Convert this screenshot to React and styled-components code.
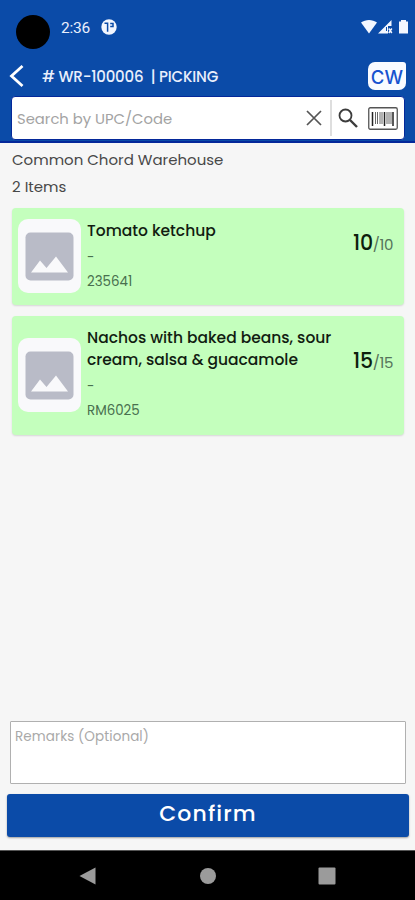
import styled, { createGlobalStyle } from "styled-components";

const GlobalStyle = createGlobalStyle`
  * {
    box-sizing: border-box;
  }
  body {
    margin: 0;
    font-family: Poppins, Inter, "Open Sans", sans-serif;
  }
`;

const Screen = styled.div`
  width: 100%;
  height: 900px;
  display: flex;
  flex-direction: column;
  background: #f6f6f6;
`;

const Header = styled.header`
  height: 143px;
  background: #0b4ba8;
  border-bottom: 2px solid #04289a;
`;

const StatusBar = styled.div`
  height: 60px;
  padding: 12px 7px 0 16px;
  display: flex;
  align-items: flex-start;
`;

const Camera = styled.span`
  width: 34px;
  height: 34px;
  margin-top: 3px;
  border-radius: 50%;
  background: #000;
`;

const Clock = styled.span`
  width: 30px;
  margin: 6px 0 0 11px;
  font-family: Roboto, sans-serif;
  font-size: 15.5px;
  line-height: 20px;
  letter-spacing: -0.2px;
  color: #e9effc;
`;

const AppBadge = styled.svg`
  width: 16px;
  height: 16px;
  margin: 7px 0 0 10px;
`;

const StatusIcons = styled.svg`
  width: 47px;
  height: 16px;
  margin: 7px 0 0 auto;
`;

const TitleBar = styled.div`
  height: 32px;
  padding: 0 9px 0 9px;
  display: flex;
  align-items: center;
`;

const BackIcon = styled.svg`
  width: 16px;
  height: 24px;
`;

const Title = styled.h1`
  margin: 0 0 0 17px;
  font-size: 15px;
  font-weight: 500;
  letter-spacing: -0.2px;
  white-space: pre;
  color: #e9effc;
`;

const Avatar = styled.div`
  width: 38px;
  height: 28px;
  margin-left: auto;
  padding-top: 1px;
  border-radius: 7px 3px 7px 7px;
  display: flex;
  align-items: center;
  justify-content: center;
  background: #f9fbff;
  color: #1752cf;
  font-family: Inter, sans-serif;
  font-size: 18.5px;
  font-weight: 500;
  letter-spacing: 0.1px;
`;

const SearchBox = styled.div`
  height: 44px;
  margin: 4px 10px 0 11px;
  padding-left: 5px;
  display: flex;
  align-items: center;
  border: 1px solid #04289a;
  border-radius: 4px;
  background: #fff;
`;

const SearchInput = styled.input`
  flex: 1;
  min-width: 0;
  padding: 1px 0 0;
  border: none;
  outline: none;
  background: none;
  font: inherit;
  font-size: 14.8px;
  &::placeholder {
    color: #a3a3a3;
    opacity: 1;
  }
`;

const Divider = styled.span`
  width: 2px;
  height: 36px;
  margin: 0 6px 0 8px;
  background: #dedede;
`;

const ClearIcon = styled.svg`
  width: 16px;
  height: 16px;
`;

const SearchIcon = styled.svg`
  width: 20px;
  height: 20px;
  margin-bottom: 1px;
`;

const BarcodeIcon = styled.svg`
  width: 30px;
  height: 24px;
  margin: 2px 6px 0 10px;
`;

const Content = styled.main`
  flex: 1;
  padding: 3px 11px 0 12px;
`;

const Info = styled.p`
  margin: 0;
  font-size: 15px;
  line-height: 27px;
  color: #484848;
`;

const Card = styled.article`
  min-height: ${(props) => (props.$tall ? "119px" : "97px")};
  margin-top: 11px;
  padding: 11px 11px 0 6px;
  display: flex;
  border-radius: 4px;
  background: #c4ffbd;
  box-shadow: 0 1px 2px rgba(0, 0, 0, 0.13);
  &:first-of-type {
    margin-top: 8px;
  }
`;

const Thumb = styled.div`
  width: 63px;
  height: 74px;
  margin-top: ${(props) => (props.$tall ? "11px" : "0")};
  display: flex;
  align-items: center;
  justify-content: center;
  border-radius: 10px;
  background: #f9f9fb;
`;

const Details = styled.div`
  flex: 1;
  padding: ${(props) => (props.$tall ? "0" : "1px")} 0 0 6px;
`;

const Name = styled.h2`
  margin: 0 0 4px;
  font-size: 15.5px;
  font-weight: 500;
  line-height: 22px;
  white-space: pre-line;
  color: #111c11;
`;

const Meta = styled.p`
  margin: 0;
  font-size: 13.4px;
  line-height: 24px;
  color: #49704f;
`;

const Quantity = styled.div`
  margin-top: ${(props) => (props.$tall ? "21px" : "11px")};
  font-size: 20.5px;
  font-weight: 500;
  line-height: 26px;
  letter-spacing: -0.2px;
  color: #0d210d;

  span {
    font-size: 15px;
    font-weight: 400;
    letter-spacing: -0.4px;
    color: #55735a;
  }
`;

const Footer = styled.footer`
  padding: 0 6px 13px 7px;
`;

const Remarks = styled.textarea`
  display: block;
  width: calc(100% - 6px);
  height: 63px;
  margin: 0 0 10px 3px;
  padding: 5px 4px;
  border: 1px solid #b0b0b0;
  border-radius: 1px;
  outline: none;
  resize: none;
  background: #fff;
  font: inherit;
  font-size: 13.5px;
  line-height: 19px;
  letter-spacing: 0.1px;
  &::placeholder {
    color: #a9a9a9;
    opacity: 1;
  }
`;

const Confirm = styled.button`
  display: block;
  width: 100%;
  height: 43px;
  padding: 0 0 5px;
  border: none;
  border-radius: 3px;
  background: #0b4ba8;
  box-shadow: 0 1px 2px rgba(0, 0, 0, 0.35);
  color: #fff;
  font: inherit;
  font-size: 22px;
  font-weight: 500;
  letter-spacing: 1.1px;
`;

const NavBar = styled.nav`
  height: 50px;
  padding: 0 79px 0 79px;
  display: flex;
  align-items: center;
  justify-content: space-between;
  border-top: 1px solid #555;
  background: #000;
`;

const NavIcon = styled.svg`
  width: 18px;
  height: 18px;
  fill: #9b9b9b;
`;

const items = [
  {
    code: "235641",
    name: "Tomato ketchup",
    picked: 10,
    total: 10,
  },
  {
    code: "RM6025",
    name: "Nachos with baked beans, sour\ncream, salsa & guacamole",
    picked: 15,
    total: 15,
    tall: true,
  },
];

function ImagePlaceholder() {
  return (
    <svg width="49" height="49" viewBox="0 0 49 49">
      <rect x="0.5" y="0.5" width="48" height="48" rx="5" fill="#b9bbc7" />
      <path d="M6 40.5L15 28.5L21.5 36L31 24.5L43 40.5Z" fill="#f9f9fb" />
    </svg>
  );
}

function Item({ item }) {
  return (
    <Card $tall={item.tall}>
      <Thumb $tall={item.tall}>
        <ImagePlaceholder />
      </Thumb>
      <Details $tall={item.tall}>
        <Name>{item.name}</Name>
        <Meta>-</Meta>
        <Meta>{item.code}</Meta>
      </Details>
      <Quantity $tall={item.tall}>
        {item.picked}
        <span>/{item.total}</span>
      </Quantity>
    </Card>
  );
}

export default function App() {
  return (
    <>
      <GlobalStyle />
      <Screen>
        <Header>
          <StatusBar>
            <Camera />
            <Clock>2:36</Clock>
            <AppBadge viewBox="0 0 16 16">
              <circle cx="8" cy="8" r="7.7" fill="#f2f6ff" />
              <path
                d="M3.5 4.2H6.6V12.8M9.2 4.4H12V7.4H9.2"
                fill="none"
                stroke="#0b4ba8"
                strokeWidth="1.5"
              />
            </AppBadge>
            <StatusIcons viewBox="0 0 47 16" fill="#f4f7ff">
              <path d="M0 3.5C4.5 0 11.5 0 16 3.5L8 14.5Z" />
              <path d="M30.5 1V7H27V14.5H17Z" />
              <path d="M27.8 9.5l3 4.5M30.8 9.5l-3 4.5" stroke="#f4f7ff" strokeWidth="1.5" />
              <path d="M25.5 8v4" stroke="#0b4ba8" />
              <path d="M40 1h5v1.5h2V14.5h-9V2.5h2Z" />
            </StatusIcons>
          </StatusBar>
          <TitleBar>
            <BackIcon viewBox="0 0 16 24">
              <path
                d="M13.5 2L2.5 12L13.5 22"
                fill="none"
                stroke="#fff"
                strokeWidth="2.8"
              />
            </BackIcon>
            <Title>{"# WR-100006  | PICKING"}</Title>
            <Avatar>CW</Avatar>
          </TitleBar>
          <SearchBox>
            <SearchInput placeholder="Search by UPC/Code" />
            <ClearIcon viewBox="0 0 16 16">
              <path d="M1 1L15 15M15 1L1 15" stroke="#555" strokeWidth="1.7" />
            </ClearIcon>
            <Divider />
            <SearchIcon viewBox="0 0 20 20" fill="none" stroke="#3c3c3c">
              <circle cx="7.5" cy="7.5" r="6" strokeWidth="1.8" />
              <path d="M12 12L19 19" strokeWidth="2.4" />
            </SearchIcon>
            <BarcodeIcon viewBox="0 0 30 24">
              <rect x="0.75" y="0.75" width="28.5" height="21.5" rx="1.5" fill="#fff" stroke="#555" strokeWidth="1.3" />
              <path d="M4.5 5v14M16.5 5v14M25 5v14" stroke="#222" strokeWidth="1.5" />
              <path d="M7.5 5v12M9.5 5v12M12 5v12M14 5v12M19 5v12M21 5v12M23 5v12" stroke="#666" strokeWidth="1" />
            </BarcodeIcon>
          </SearchBox>
        </Header>
        <Content>
          <Info>Common Chord Warehouse</Info>
          <Info>2 Items</Info>
          {items.map((item) => (
            <Item key={item.code} item={item} />
          ))}
        </Content>
        <Footer>
          <Remarks placeholder="Remarks (Optional)" />
          <Confirm>Confirm</Confirm>
        </Footer>
        <NavBar>
          <NavIcon viewBox="0 0 18 18">
            <path d="M0.5 9L16.5 0.5V17.5Z" />
          </NavIcon>
          <NavIcon viewBox="0 0 18 18">
            <circle cx="9" cy="9" r="8" />
          </NavIcon>
          <NavIcon viewBox="0 0 18 18">
            <rect x="0.5" y="0.5" width="17" height="17" rx="1" />
          </NavIcon>
        </NavBar>
      </Screen>
    </>
  );
}
